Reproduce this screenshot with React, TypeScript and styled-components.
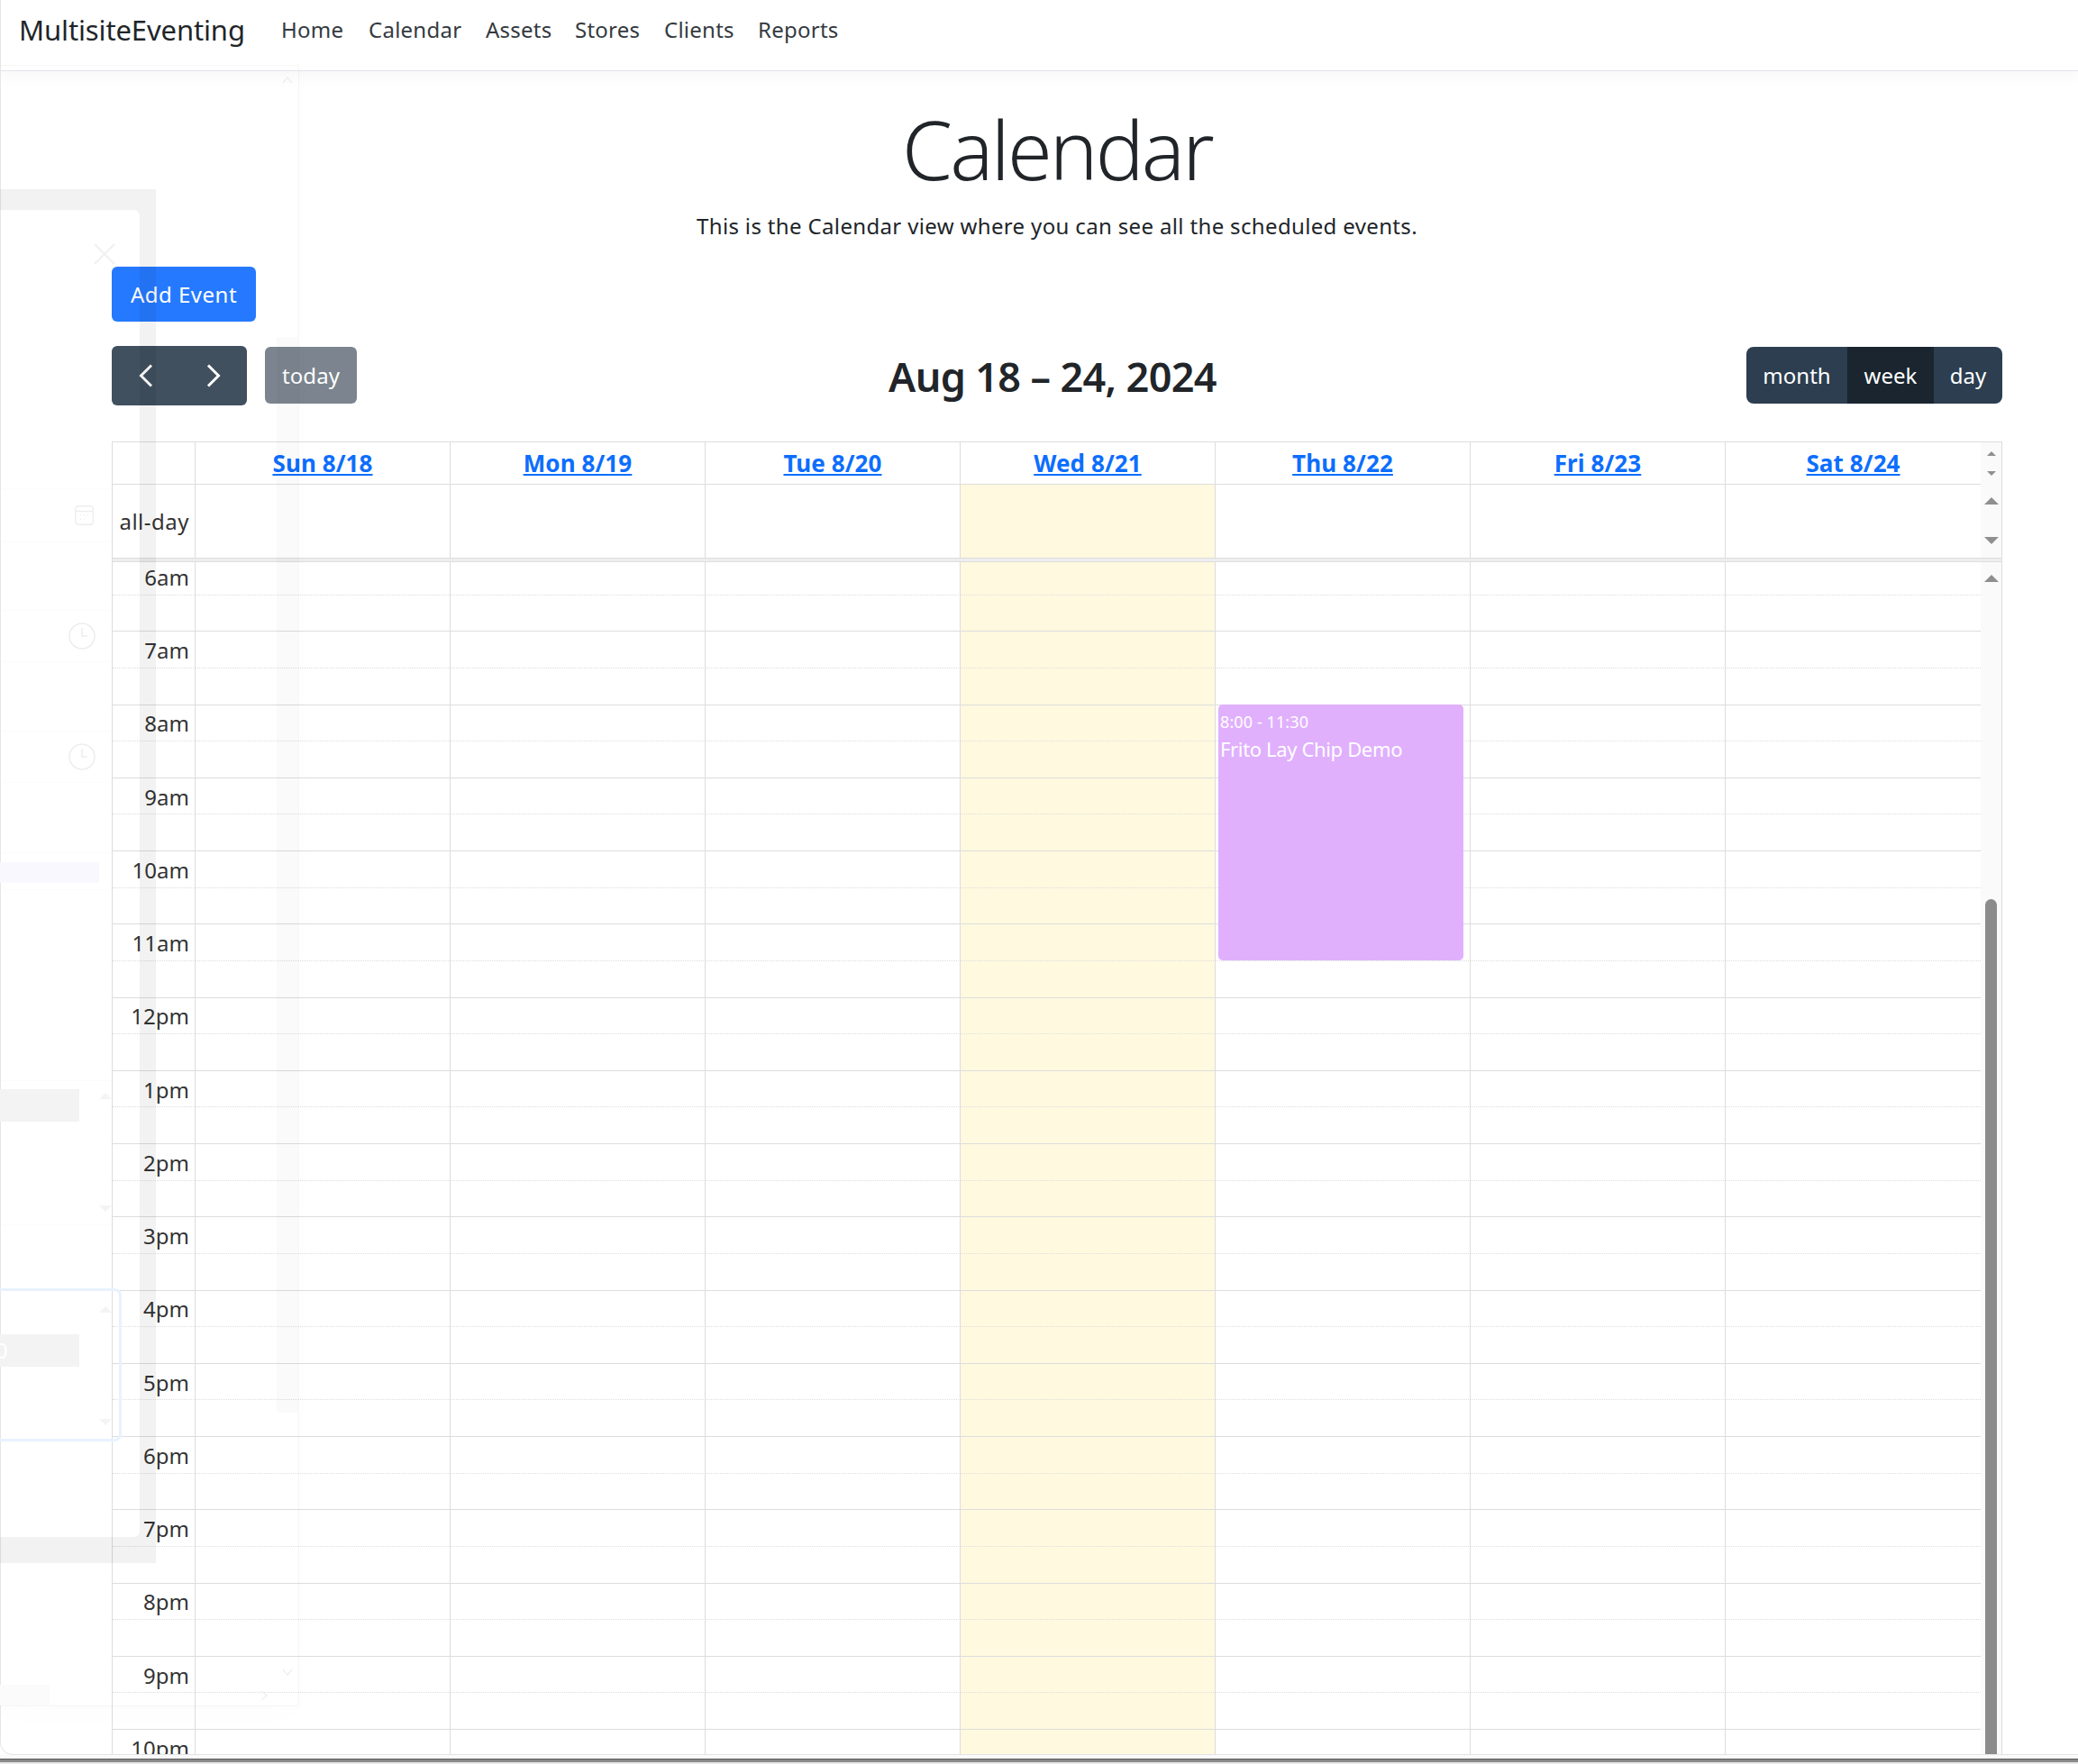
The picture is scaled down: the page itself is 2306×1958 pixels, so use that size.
import React from "react";
import styled, { createGlobalStyle, css } from "styled-components";

const Global = createGlobalStyle`
  html, body { margin: 0; padding: 0; background: #fff; }
  body { font-family: "Noto Sans", "Open Sans", "Liberation Sans", sans-serif; color: #212529; }
  * { box-sizing: border-box; }
`;

const Page = styled.div`
  position: relative;
  width: 2306px;
  height: 1958px;
  overflow: hidden;
  display: flex;
  flex-direction: column;
  background: #fff;
`;

const Frame = styled.div`
  height: 1948px;
  display: flex;
  flex-direction: column;
  border-left: 1px solid #e6e6e6;
  border-bottom: 1px solid #e4e4e4;
  border-bottom-left-radius: 14px;
  overflow: hidden;
  flex: none;
`;

const Footer = styled.div`
  height: 10px;
  flex: none;
  background: linear-gradient(#fafafa 0 4px, #5a5a5a 4px 5px, #8a8a8a 5px 8px, #e8e8e8 8px);
`;

const Navbar = styled.nav`
  height: 79px;
  flex: none;
  display: flex;
  align-items: center;
  padding-left: 20px;
  border-bottom: 1px solid #e2e2ea;
  box-shadow: 0 6px 18px rgba(0, 0, 0, 0.035);
  position: relative;
`;

const Brand = styled.div`
  font-size: 31px;
  letter-spacing: -0.13px;
  color: #212529;
  width: 291px;
  margin-top: -13px;
`;

const NavLink = styled.a<{ $w: number }>`
  font-size: 24px;
  letter-spacing: 0.25px;
  color: #343a40;
  width: ${(p) => p.$w}px;
  margin-top: -14px;
`;

const Main = styled.main`
  flex: 1;
  min-height: 0;
  display: flex;
  flex-direction: column;
  padding: 0 84px 0 123px;
`;

const Title = styled.h1`
  margin: 41px 0 0;
  text-align: center;
  font-weight: 300;
  font-size: 90px;
  line-height: 90px;
  letter-spacing: -2.8px;
  color: #212529;
`;

const Lead = styled.p`
  margin: 23px 0 0;
  text-align: center;
  font-size: 24px;
  line-height: 36px;
  letter-spacing: 0.35px;
  color: #212529;
`;

const AddRow = styled.div`
  margin-top: 27px;
  height: 61px;
  flex: none;
`;

const AddButton = styled.button`
  width: 160px;
  height: 61px;
  border: 0;
  border-radius: 6px;
  background: #2579ff;
  color: #fff;
  font: inherit;
  font-size: 24px;
  letter-spacing: 0.5px;
  padding: 0;
`;

const Toolbar = styled.div`
  margin-top: 27px;
  height: 66px;
  flex: none;
  display: grid;
  grid-template-columns: 1fr auto 1fr;
  align-items: center;
`;

const ToolLeft = styled.div`
  display: flex;
  align-items: center;
  gap: 20px;
`;

const ArrowGroup = styled.div`
  display: flex;
  width: 150px;
  height: 66px;
  background: #40505f;
  border-radius: 6px;
`;

const ArrowButton = styled.span`
  flex: 1;
  display: flex;
  align-items: center;
  justify-content: center;
`;

const TodayButton = styled.button`
  width: 102px;
  height: 63px;
  margin-top: -2px;
  border: 0;
  border-radius: 6px;
  background: #7b848f;
  color: #fff;
  font: inherit;
  font-size: 24px;
  letter-spacing: 0.1px;
  padding: 0;
`;

const RangeTitle = styled.h2`
  margin: 0 0 0 -10px;
  font-size: 45px;
  font-weight: 600;
  letter-spacing: -0.65px;
  color: #212529;
`;

const ViewGroup = styled.div`
  justify-self: end;
  display: flex;
  height: 63px;
  margin-top: -2px;
  border-radius: 8px;
  overflow: hidden;
  background: #2c3e50;
`;

const ViewButton = styled.span<{ $w: number; $active?: boolean }>`
  width: ${(p) => p.$w}px;
  display: flex;
  align-items: center;
  justify-content: center;
  color: #fff;
  font-size: 24px;
  letter-spacing: 0;
  background: ${(p) => (p.$active ? "#1a252f" : "transparent")};
`;

const Table = styled.div`
  margin-top: 40px;
  flex: 1;
  min-height: 0;
  display: flex;
  flex-direction: column;
  border: 1px solid #ddd;
  border-bottom: 0;
  overflow: hidden;
`;

const Row = styled.div`
  display: grid;
  grid-template-columns: 92px repeat(7, 283px) 23px;
  flex: none;
`;

const HeadCell = styled.div<{ $last?: boolean }>`
  height: 47px;
  display: flex;
  align-items: center;
  justify-content: center;
  border-bottom: 1px solid #ddd;
  border-right: ${(p) => (p.$last ? "0" : "1px solid #ddd")};
`;

const DayLink = styled.a`
  font-size: 26px;
  font-weight: 700;
  color: #0d6efd;
  text-decoration: underline;
  letter-spacing: 0.1px;
`;

const AllDayCell = styled.div<{ $today?: boolean; $last?: boolean }>`
  height: 81px;
  border-right: ${(p) => (p.$last ? "0" : "1px solid #ddd")};
  background: ${(p) => (p.$today ? "#fff9df" : "transparent")};
`;

const AxisCell = styled(AllDayCell)`
  display: flex;
  align-items: center;
  justify-content: flex-end;
  padding-right: 6px;
  font-size: 24px;
  letter-spacing: 0.5px;
  color: #333;
`;

const ScrollTrack = styled.div`
  background: #fafafa;
  position: relative;
  display: flex;
  flex-direction: column;
  align-items: center;
  justify-content: space-between;
`;

const Tri = styled.i<{ $dir: "up" | "down"; $size: number }>`
  display: block;
  width: 0;
  height: 0;
  border-left: ${(p) => p.$size}px solid transparent;
  border-right: ${(p) => p.$size}px solid transparent;
  ${(p) =>
    p.$dir === "up"
      ? css`border-bottom: ${p.$size}px solid #8f8f8f;`
      : css`border-top: ${p.$size}px solid #8f8f8f;`}
`;

const HeadTrack = styled(ScrollTrack)`
  height: 47px;
  padding: 10px 0;
`;

const AllDayTrack = styled(ScrollTrack)`
  height: 81px;
  padding: 14px 0 15px;
`;

const Divider = styled.div`
  height: 5px;
  flex: none;
  background: #eee;
  border-top: 1px solid #ddd;
  border-bottom: 1px solid #ddd;
`;

const TimeBody = styled.div`
  flex: 1;
  min-height: 0;
  display: grid;
  grid-template-columns: 1fr 23px;
  overflow: hidden;
`;

const Slots = styled.div`
  margin-top: -4px;
  min-width: 0;
`;

const SlotRow = styled.div`
  display: grid;
  grid-template-columns: 92px repeat(7, 283px);
  height: 40.625px;
`;

const SlotCell = styled.div<{ $major: boolean; $today?: boolean; $last?: boolean }>`
  position: relative;
  border-bottom: 1px ${(p) => (p.$major ? "solid" : "dotted")} #ddd;
  border-right: ${(p) => (p.$last ? "0" : "1px solid #ddd")};
  background: ${(p) => (p.$today ? "#fff9df" : "transparent")};
`;

const TimeLabel = styled(SlotCell)`
  display: flex;
  align-items: center;
  justify-content: flex-end;
  padding: 2px 6px 0 0;
  font-size: 24px;
  letter-spacing: 0.05px;
  line-height: 1;
  color: #333;
`;

const EventCard = styled.div`
  position: absolute;
  z-index: 2;
  top: -1px;
  left: 3px;
  width: 272px;
  height: 284px;
  border-radius: 5px;
  background: #e0b0fd;
  color: #fff;
  padding: 6px 2px;
`;

const EventTime = styled.div`
  font-size: 18px;
  line-height: 26px;
  letter-spacing: 0.1px;
`;

const EventName = styled.div`
  font-size: 22px;
  line-height: 34px;
  letter-spacing: -0.35px;
`;

const BodyTrack = styled(ScrollTrack)`
  justify-content: flex-start;
  padding-top: 14px;
`;

const Thumb = styled.div`
  position: absolute;
  left: 5px;
  top: 374px;
  bottom: -2px;
  width: 13px;
  border-radius: 7px 7px 0 0;
  background: #8b8b8b;
`;

/* ---- the fading dialog that lies over the left of the page ---- */
const Overlay = styled.div`
  position: absolute;
  inset: 0;
  z-index: 5;
  pointer-events: none;
`;

const GhostPanel = styled.div`
  position: absolute;
  left: 0;
  top: 72px;
  width: 332px;
  height: 1822px;
  border: 1px solid rgba(0, 0, 0, 0.035);
  border-left: 0;
  box-shadow: 0 10px 30px rgba(0, 0, 0, 0.012);
`;

const GhostSideBand = styled.div`
  position: absolute;
  left: 307px;
  top: 374px;
  width: 24px;
  height: 1194px;
  background: rgba(0, 0, 0, 0.02);
`;

const DialogClip = styled.div`
  position: absolute;
  left: 0;
  top: 210px;
  width: 173px;
  height: 1525px;
  overflow: hidden;
  padding: 23px 18px 29px 0;
`;

const DialogHole = styled.div`
  height: 100%;
  margin-left: -30px;
  border-radius: 7px;
  box-shadow: 0 0 0 60px rgba(0, 0, 0, 0.05);
`;

const GhostBox = styled.div<{ $top: number; $h: number; $focus?: boolean }>`
  position: absolute;
  left: -10px;
  top: ${(p) => p.$top}px;
  width: ${(p) => (p.$focus ? 145 : 140)}px;
  height: ${(p) => p.$h}px;
  border: ${(p) => (p.$focus ? "3px solid #e8f2ff" : "1px solid rgba(0,0,0,0.012)")};
  border-radius: 8px;
`;

const GhostBar = styled.div<{ $top: number; $w: number; $h: number; $bg: string }>`
  position: absolute;
  left: 0;
  top: ${(p) => p.$top}px;
  width: ${(p) => p.$w}px;
  height: ${(p) => p.$h}px;
  background: ${(p) => p.$bg};
  color: #fff;
  font-size: 24px;
  line-height: ${(p) => p.$h}px;
`;

const GhostDigit = styled.span`
  display: inline-block;
  margin-left: -5px;
`;

const GhostTri = styled.i<{ $top: number; $up?: boolean }>`
  position: absolute;
  left: 110px;
  top: ${(p) => p.$top}px;
  width: 0;
  height: 0;
  border-left: 7px solid transparent;
  border-right: 7px solid transparent;
  ${(p) =>
    p.$up
      ? css`border-bottom: 7px solid #f4f4f4;`
      : css`border-top: 7px solid #f4f4f4;`}
`;

const GhostIcon = styled.svg<{ $x: number; $y: number }>`
  position: absolute;
  left: ${(p) => p.$x}px;
  top: ${(p) => p.$y}px;
  overflow: visible;
`;

const days = ["Sun 8/18", "Mon 8/19", "Tue 8/20", "Wed 8/21", "Thu 8/22", "Fri 8/23", "Sat 8/24"];
const links: [string, number][] = [
  ["Home", 97],
  ["Calendar", 130],
  ["Assets", 99],
  ["Stores", 99],
  ["Clients", 104],
  ["Reports", 100],
];
const hours = ["6am","7am","8am","9am","10am","11am","12pm","1pm","2pm","3pm","4pm","5pm","6pm","7pm","8pm","9pm","10pm"];

const Clock = ({ x, y, r }: { x: number; y: number; r: number }) => (
  <GhostIcon $x={x} $y={y} width={r * 2} height={r * 2} viewBox="0 0 30 30" fill="none" stroke="#eeeeee" strokeWidth="1.6">
    <circle cx="15" cy="15" r="14" />
    <path d="M15 6v9h6" />
  </GhostIcon>
);

const Chevron = ({ dir }: { dir: "left" | "right" }) => (
  <svg width="16" height="26" viewBox="0 0 16 26" fill="none" stroke="#fff" strokeWidth="3">
    <path d={dir === "left" ? "M14 1.5 2.5 13 14 24.5" : "M2 1.5 13.5 13 2 24.5"} />
  </svg>
);

export default function App() {
  const slots = Array.from({ length: 34 });
  return (
    <Page>
      <Global />
      <Frame>
        <Navbar>
          <Brand>MultisiteEventing</Brand>
          {links.map(([label, w]) => (
            <NavLink key={label} $w={w}>{label}</NavLink>
          ))}
        </Navbar>
        <Main>
          <Title>Calendar</Title>
          <Lead>This is the Calendar view where you can see all the scheduled events.</Lead>
          <AddRow>
            <AddButton>Add Event</AddButton>
          </AddRow>
          <Toolbar>
            <ToolLeft>
              <ArrowGroup>
                <ArrowButton><Chevron dir="left" /></ArrowButton>
                <ArrowButton><Chevron dir="right" /></ArrowButton>
              </ArrowGroup>
              <TodayButton>today</TodayButton>
            </ToolLeft>
            <RangeTitle>Aug 18 – 24, 2024</RangeTitle>
            <ViewGroup>
              <ViewButton $w={112}>month</ViewButton>
              <ViewButton $w={96} $active>week</ViewButton>
              <ViewButton $w={76}>day</ViewButton>
            </ViewGroup>
          </Toolbar>
          <Table>
            <Row>
              <HeadCell />
              {days.map((d, i) => (
                <HeadCell key={d} $last={i === 6}><DayLink>{d}</DayLink></HeadCell>
              ))}
              <HeadTrack>
                <Tri $dir="up" $size={5} />
                <Tri $dir="down" $size={5} />
              </HeadTrack>
            </Row>
            <Row>
              <AxisCell>all-day</AxisCell>
              {days.map((d, i) => (
                <AllDayCell key={d} $today={i === 3} $last={i === 6} />
              ))}
              <AllDayTrack>
                <Tri $dir="up" $size={8} />
                <Tri $dir="down" $size={8} />
              </AllDayTrack>
            </Row>
            <Divider />
            <TimeBody>
              <Slots>
                {slots.map((_, r) => {
                  const major = r % 2 === 1;
                  return (
                    <SlotRow key={r}>
                      <TimeLabel $major={major}>{r % 2 === 0 ? hours[r / 2] : ""}</TimeLabel>
                      {days.map((d, i) => (
                        <SlotCell key={d} $major={major} $today={i === 3} $last={i === 6}>
                          {r === 4 && i === 4 && (
                            <EventCard>
                              <EventTime>8:00 - 11:30</EventTime>
                              <EventName>Frito Lay Chip Demo</EventName>
                            </EventCard>
                          )}
                        </SlotCell>
                      ))}
                    </SlotRow>
                  );
                })}
              </Slots>
              <BodyTrack>
                <Tri $dir="up" $size={8} />
                <Thumb />
              </BodyTrack>
            </TimeBody>
          </Table>
        </Main>
      </Frame>
      <Footer />
      <Overlay>
        <GhostPanel />
        <GhostSideBand />
        <DialogClip><DialogHole /></DialogClip>
        <GhostIcon $x={104} $y={270} width="24" height="24" viewBox="0 0 24 24" stroke="#f1f1f1" strokeWidth="2.4" fill="none">
          <path d="M1 1 23 23M23 1 1 23" />
        </GhostIcon>
        <GhostBox $top={542} $h={60} />
        <GhostBox $top={677} $h={58} />
        <GhostBox $top={811} $h={58} />
        <GhostBox $top={946} $h={42} />
        <GhostBox $top={1199} $h={161} />
        <GhostBox $top={1430} $h={170} $focus />
        <GhostIcon $x={83} $y={561} width="21" height="22" viewBox="0 0 21 22" fill="none" stroke="#eeeeee" strokeWidth="1.4">
          <rect x="0.7" y="0.7" width="19.6" height="20.6" rx="3" />
          <path d="M0.7 6.5h19.6M6 11h1M10 11h1M14 11h1M6 15.5h1M10 15.5h1" />
        </GhostIcon>
        <Clock x={76} y={691} r={15} />
        <Clock x={76} y={825} r={15} />
        <GhostBar $top={957} $w={110} $h={23} $bg="#faf8ff" />
        <GhostBar $top={1209} $w={88} $h={36} $bg="#f3f3f3" />
        <GhostBar $top={1481} $w={88} $h={36} $bg="#f3f3f3"><GhostDigit>0</GhostDigit></GhostBar>
        <GhostBar $top={1870} $w={55} $h={23} $bg="#fbfbfb" />
        <GhostTri $top={1213} $up />
        <GhostTri $top={1338} />
        <GhostTri $top={1450} $up />
        <GhostTri $top={1575} />
        <GhostIcon $x={313} $y={85} width="12" height="8" viewBox="0 0 12 8" fill="none" stroke="#f0f0f0" strokeWidth="1.6">
          <path d="M1 7 6 1l5 6" />
        </GhostIcon>
        <GhostIcon $x={313} $y={1852} width="12" height="8" viewBox="0 0 12 8" fill="none" stroke="#f0f0f0" strokeWidth="1.6">
          <path d="M1 1l5 6 5-6" />
        </GhostIcon>
        <GhostIcon $x={289} $y={1876} width="8" height="12" viewBox="0 0 8 12" fill="none" stroke="#f0f0f0" strokeWidth="1.6">
          <path d="M1 1l6 5-6 5" />
        </GhostIcon>
      </Overlay>
    </Page>
  );
}
